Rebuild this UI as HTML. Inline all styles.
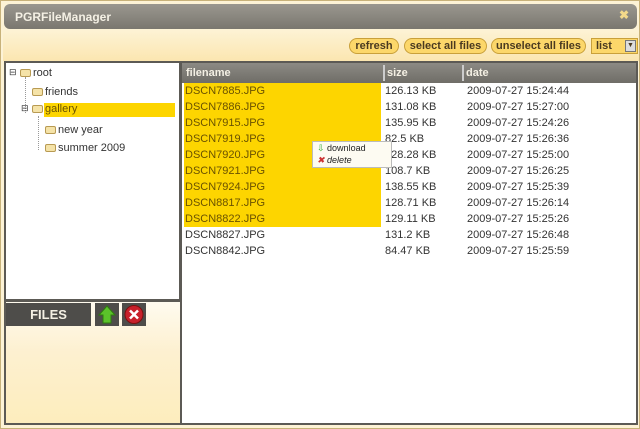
<!DOCTYPE html>
<html><head><style>
*{margin:0;padding:0;box-sizing:border-box}
body{width:640px;height:429px;overflow:hidden;background:#fdf3d6;font-family:"Liberation Sans",sans-serif;position:relative;border:1px solid #c8b27a}
.abs{position:absolute}
#title{left:3px;top:3px;width:633px;height:25px;border-radius:6px;background:linear-gradient(#9a978f,#7a776f);color:#f4f0e4;font-weight:bold;font-size:12px;padding:6px 0 0 11px}
#close{right:10px;top:7px;color:#f3d98a;font-size:12px;font-weight:bold}
#tb{left:2px;top:28px;width:636px;height:32px;background:linear-gradient(#fdf3d6,#fbe6b0)}
.btn{position:absolute;top:37px;height:16px;border:1px solid #c9a03a;border-radius:8px;background:#fcd76a;font-size:11px;font-weight:bold;color:#4a3a20;text-align:center;line-height:14px}
#left{left:3px;top:60px;width:176px;height:240px;background:#fff;border:2px solid #5c5a55;border-right:1px solid #5c5a55}
#lb{left:3px;top:299px;width:176px;height:125px;background:linear-gradient(#fffbef 0,#fdf0d0 50px,#fdedbd);border-left:2px solid #5c5a55;border-bottom:2px solid #5c5a55;border-top:2px solid #5c5a55}
#right{left:179px;top:60px;width:458px;height:364px;background:#fff;border:2px solid #5c5a55;border-left:2px solid #5c5a55}
#hdr{left:181px;top:62px;width:454px;height:20px;background:linear-gradient(#8c8a84,#6f6d67);color:#f4f0e4;font-weight:bold;font-size:11px}
.row{position:absolute;left:183px;height:16px;font-size:11px;color:#333;line-height:16px}
.f{position:absolute;left:0;width:197px;padding-left:1px}
.y{background:#fdd500;color:#6a5200}
.s{position:absolute;left:201px;width:80px}
.d{position:absolute;left:283px;width:120px}
.t{position:absolute;font-size:11px;color:#333}
.fold{display:inline-block;width:11px;height:8px;background:#f5e3a8;border:1px solid #b89a52;border-radius:2px;vertical-align:-1px;margin-right:2px}
</style></head><body>
<div id="title" class="abs">PGRFileManager</div>
<div id="close" class="abs">✖</div>
<div id="tb" class="abs"></div>
<div class="btn" style="left:348px;width:50px">refresh</div>
<div class="btn" style="left:403px;width:83px">select all files</div>
<div class="btn" style="left:490px;width:95px">unselect all files</div>
<div class="abs" style="left:590px;top:37px;width:47px;height:16px;background:#fcd76a;border:1px solid #c9a03a;font-size:11px;font-weight:bold;color:#4a3a20;padding:1px 0 0 4px">list<span style="position:absolute;right:1px;top:1px;width:11px;height:12px;background:#ddd;border:1px solid #777;font-size:7px;line-height:10px;text-align:center">▼</span></div>
<div id="left" class="abs"></div>
<div class="t" style="left:8px;top:66px;font-size:9px">⊟</div>
<div class="t" style="left:19px;top:66px"><span class="fold"></span>root</div>
<div class="abs" style="left:24px;top:76px;height:36px;border-left:1px dotted #999"></div>
<div class="t" style="left:31px;top:85px"><span class="fold"></span>friends</div>
<div class="t" style="left:20px;top:102px;font-size:9px">⊟</div>
<div class="abs" style="left:43px;top:102px;width:131px;height:14px;background:#fdd500"></div>
<div class="t" style="left:31px;top:102px;color:#6a5200"><span class="fold"></span>gallery</div>
<div class="abs" style="left:37px;top:115px;height:34px;border-left:1px dotted #999"></div>
<div class="t" style="left:44px;top:123px"><span class="fold"></span>new year</div>
<div class="t" style="left:44px;top:141px"><span class="fold"></span>summer 2009</div>
<div id="lb" class="abs"></div>
<div class="abs" style="left:5px;top:302px;width:85px;height:23px;background:#4e4d4a;color:#f4f0e4;font-weight:bold;font-size:13px;text-align:center;line-height:23px">FILES</div>
<div class="abs" style="left:94px;top:302px;width:24px;height:23px;background:#4e4d4a"><svg width="24" height="23"><path d="M12 3 L20 12 L16 12 L16 20 L8 20 L8 12 L4 12Z" fill="#5bc22a" stroke="#2f7a10"/></svg></div>
<div class="abs" style="left:121px;top:302px;width:24px;height:23px;background:#4e4d4a"><svg width="24" height="23"><circle cx="12" cy="11.5" r="9" fill="#c8202a" stroke="#7a1010"/><path d="M8 7.5 L16 15.5 M16 7.5 L8 15.5" stroke="#fff" stroke-width="2.5"/></svg></div>
<div id="right" class="abs"></div>
<div id="hdr" class="abs"><span style="position:absolute;left:4px;top:4px">filename</span><span style="position:absolute;left:201px;top:2px;height:16px;border-left:2px solid #ccc"></span><span style="position:absolute;left:205px;top:4px">size</span><span style="position:absolute;left:280px;top:2px;height:16px;border-left:2px solid #ccc"></span><span style="position:absolute;left:284px;top:4px">date</span></div>
<div class="row" style="top:82px"><span class="f y">DSCN7885.JPG</span><span class="s">126.13 KB</span><span class="d">2009-07-27 15:24:44</span></div>
<div class="row" style="top:98px"><span class="f y">DSCN7886.JPG</span><span class="s">131.08 KB</span><span class="d">2009-07-27 15:27:00</span></div>
<div class="row" style="top:114px"><span class="f y">DSCN7915.JPG</span><span class="s">135.95 KB</span><span class="d">2009-07-27 15:24:26</span></div>
<div class="row" style="top:130px"><span class="f y">DSCN7919.JPG</span><span class="s">82.5 KB</span><span class="d">2009-07-27 15:26:36</span></div>
<div class="row" style="top:146px"><span class="f y">DSCN7920.JPG</span><span class="s">128.28 KB</span><span class="d">2009-07-27 15:25:00</span></div>
<div class="row" style="top:162px"><span class="f y">DSCN7921.JPG</span><span class="s">108.7 KB</span><span class="d">2009-07-27 15:26:25</span></div>
<div class="row" style="top:178px"><span class="f y">DSCN7924.JPG</span><span class="s">138.55 KB</span><span class="d">2009-07-27 15:25:39</span></div>
<div class="row" style="top:194px"><span class="f y">DSCN8817.JPG</span><span class="s">128.71 KB</span><span class="d">2009-07-27 15:26:14</span></div>
<div class="row" style="top:210px"><span class="f y">DSCN8822.JPG</span><span class="s">129.11 KB</span><span class="d">2009-07-27 15:25:26</span></div>
<div class="row" style="top:226px"><span class="f">DSCN8827.JPG</span><span class="s">131.2 KB</span><span class="d">2009-07-27 15:26:48</span></div>
<div class="row" style="top:242px"><span class="f">DSCN8842.JPG</span><span class="s">84.47 KB</span><span class="d">2009-07-27 15:25:59</span></div>
<div class="abs" style="left:311px;top:140px;width:80px;height:27px;background:#fdfbf2;border:1px solid #bbb;font-size:9px;color:#222">
<div style="position:absolute;left:4px;top:1px"><span style="color:#3a3">⇩</span> download</div>
<div style="position:absolute;left:4px;top:13px;font-style:italic"><span style="color:#c33">✖</span> delete</div></div>
</body></html>
